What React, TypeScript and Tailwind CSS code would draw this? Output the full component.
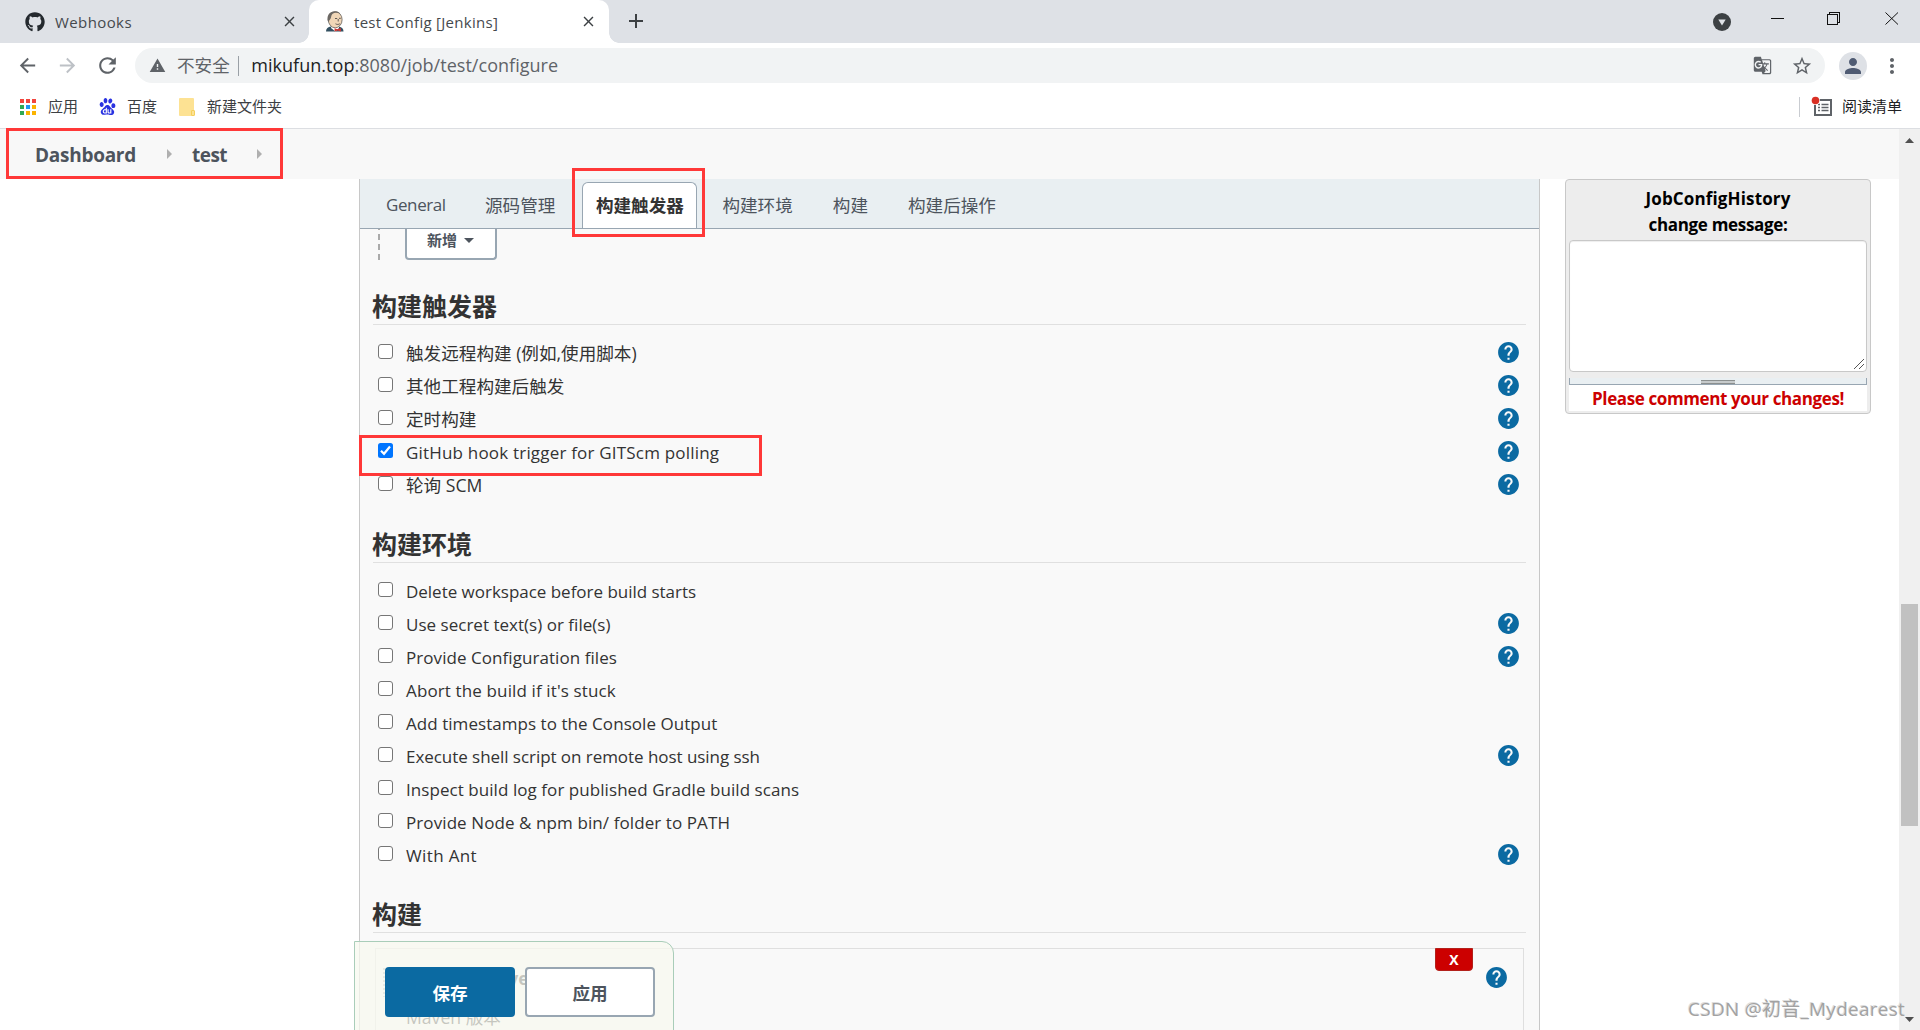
import React from "react";
import { FaGithub } from "react-icons/fa";
import { SiBaidu } from "react-icons/si";
import {
  MdAdd,
  MdArrowBack,
  MdArrowForward,
  MdClose,
  MdGTranslate,
  MdHelp,
  MdMoreVert,
  MdPerson,
  MdRefresh,
  MdStarBorder,
  MdWarning,
} from "react-icons/md";

const UI = "font-['Open_Sans','Noto_Sans_CJK_SC',sans-serif]";

function JenkinsIcon() {
  return (
    <svg width="20" height="21" viewBox="0 0 20 21">
      <path d="M1 20.500c0-3 2-4.500 5-5l8 .300c3 .400 4.500 2 4.500 4.700z" fill="#335061" />
      <path d="M7 14l-1 3 4.500 3.500L14 17v-3z" fill="#fff" />
      <ellipse cx="10.200" cy="8.700" rx="6.900" ry="8.100" fill="#f0d6b7" stroke="#4d4a48" strokeWidth=".7" />
      <path d="M3.300 11C1.700 8 2.600 3 6 1.300 8.500 0 13 0 15 2.300c-3-1-6-.8-7.600.7C5.800 4.600 6.500 7 5 8.500z" fill="#6b6763" />
      <path d="M10 7.500h2.200M14 7.300h1.800M10.500 12.800c1.500.900 3 .800 4.300 0M13.200 8v2.500" stroke="#4d4a48" strokeWidth=".9" fill="none" />
      <path d="M9.500 17.200l3 1 3.200-1.200.3 3.600-3.300-1-3 1z" fill="#d33833" />
    </svg>
  );
}

function TabStrip() {
  return (
    <div className="flex h-[43px] shrink-0 bg-[#dee1e6] text-[15px] text-[#45494d]">
      <div className="flex w-[309px] items-center pl-[25px]">
        <FaGithub className="h-5 w-5 text-[#24292e]" />
        <span className="ml-[10px] pt-px tracking-[0.4px]">Webhooks</span>
        <MdClose className="ml-auto mr-[11px] h-[17px] w-[17px] text-[#3c4043]" />
      </div>
      <div className="relative flex w-[300px] items-center rounded-t-[10px] bg-white pl-4">
        <div className="absolute -left-[10px] bottom-0 h-[10px] w-[10px] bg-[radial-gradient(circle_at_0_0,#dee1e6_9.5px,#fff_10px)]" />
        <div className="absolute -right-[10px] bottom-0 h-[10px] w-[10px] bg-[radial-gradient(circle_at_100%_0,#dee1e6_9.5px,#fff_10px)]" />
        <JenkinsIcon />
        <span className="ml-[9px] pt-px tracking-[0.28px]">test Config [Jenkins]</span>
        <MdClose className="ml-auto mr-[12px] h-[17px] w-[17px] text-[#3c4043]" />
      </div>
      <MdAdd className="ml-[15px] mt-[9px] h-6 w-6 text-[#3c4043]" />
      <svg className="ml-auto mr-[30px] mt-[13px]" width="18" height="18" viewBox="0 0 18 18">
        <circle cx="9" cy="9" r="9" fill="#3c4043" />
        <path d="M5.300 6.500h7.400L9 12.500z" fill="#dee1e6" />
      </svg>
      <svg className="mr-[21px] mt-3" width="138" height="14" viewBox="0 0 138 14" fill="none" stroke="#111">
        <path d="M10 6.500h13M66.500 2.500h10v10h-10zM68.500 2.500v-2h10v10h-2" shapeRendering="crispEdges" />
        <path d="M124.500.5l12.500 12M137 .5l-12.500 12" />
      </svg>
    </div>
  );
}

function Toolbar() {
  return (
    <div className="flex h-[45px] shrink-0 items-center bg-white pl-4 text-[#5f6368]">
      <MdArrowBack className="h-[23px] w-[23px]" />
      <MdArrowForward className="ml-[17px] h-[23px] w-[23px] text-[#bdc1c6]" />
      <MdRefresh className="ml-[16px] h-[25px] w-[25px]" />
      <div className="ml-[15px] flex h-[35px] w-[1690px] items-center rounded-full bg-[#f1f3f4] pl-[14px] pr-[12px] text-[18px]">
        <MdWarning className="h-[17px] w-[17px]" />
        <span className="ml-[11px] text-[17.600px]">不安全</span>
        <span className="ml-[8px] h-5 w-[1.500px] bg-[#9aa0a6]" />
        <span className="ml-[12px] tracking-[0.03px]">
          <span className="text-[#202124]">mikufun.top</span>:8080/job/test/configure
        </span>
        <MdGTranslate className="ml-auto h-[19px] w-[19px]" />
        <MdStarBorder className="ml-[19px] h-[22px] w-[22px]" />
      </div>
      <div className="ml-[14px] flex h-7 w-7 items-center justify-center rounded-full bg-[#dee1e6]">
        <MdPerson className="h-[24px] w-[24px] text-[#4f5b73]" />
      </div>
      <MdMoreVert className="ml-[13px] h-[24px] w-[24px]" />
    </div>
  );
}

const APP_COLORS = [
  "bg-[#f2453d]", "bg-[#f2453d]", "bg-[#f2453d]",
  "bg-[#30a853]", "bg-[#2196f3]", "bg-[#fbb300]",
  "bg-[#30a853]", "bg-[#fbb300]", "bg-[#fbb300]",
];

function Bookmarks() {
  return (
    <div className="flex h-[41px] shrink-0 items-center border-b border-[#dcdee2] bg-white pb-[3px] pl-5 text-[15px] text-[#3c4043]">
      <div className="grid grid-cols-3 gap-[2px]">
        {APP_COLORS.map((c, i) => (
          <span key={i} className={`h-1 w-1 ${c}`} />
        ))}
      </div>
      <span className="ml-[12px]">应用</span>
      <SiBaidu className="ml-[21px] h-[17px] w-[17px] text-[#2932e1]" />
      <span className="ml-[11px]">百度</span>
      <span className="relative ml-[22px] h-[18px] w-[15px] rounded-[1px] bg-[#fde293]">
        <span className="absolute -right-px bottom-0 h-[6px] w-[4px] rounded-[1px] border border-[#f5cf5b] bg-[#fde293]" />
      </span>
      <span className="ml-[13px]">新建文件夹</span>
      <span className="ml-auto h-5 w-px bg-[#c9ccd1]" />
      <svg className="ml-[11px]" width="22" height="22" viewBox="0 0 22 22">
        <rect x="4" y="4" width="16" height="15" fill="none" stroke="#5f6368" strokeWidth="2" />
        <path d="M7 8.500h2M10.500 8.500h7M7 11.500h2M10.500 11.500h7M7 14.500h2M10.500 14.500h7" stroke="#5f6368" strokeWidth="1.500" />
        <circle cx="4.500" cy="4.500" r="4.500" fill="#fff" />
        <circle cx="4.500" cy="4.500" r="3.800" fill="#d93025" />
      </svg>
      <span className="ml-[9px] mr-[18px] text-[#202124]">阅读清单</span>
    </div>
  );
}

function Crumb() {
  return (
    <svg width="5" height="10" viewBox="0 0 5 10">
      <path d="M0 0l5 5-5 5z" fill="#b0b0b0" />
    </svg>
  );
}

function Help() {
  return <MdHelp className="h-[25px] w-[25px] text-[#0b6aa2]" />;
}

function Heading({ children }: { children: React.ReactNode }) {
  return (
    <h2 className="h-[41px] border-b border-[#e0e0e0] text-[25px] font-bold leading-[41px] text-[#333]">
      <span className="relative -left-px top-[2px]">{children}</span>
    </h2>
  );
}

type Item = { label: string; text: string; help?: boolean; checked?: boolean };

const TRIGGERS: Item[] = [
  { label: "触发远程构建 (例如,使用脚本)", text: "text-[17.6px]", help: true },
  { label: "其他工程构建后触发", text: "text-[17.6px]", help: true },
  { label: "定时构建", text: "text-[17.6px]", help: true },
  { label: "GitHub hook trigger for GITScm polling", text: "text-[17px] font-medium tracking-[0.19px]", help: true, checked: true },
  { label: "轮询 SCM", text: "text-[17.6px]", help: true },
];

const ENVIRONMENT: Item[] = [
  { label: "Delete workspace before build starts", text: "text-[17px] font-medium tracking-[-0.02px]" },
  { label: "Use secret text(s) or file(s)", text: "text-[17px] font-medium tracking-[0.02px]", help: true },
  { label: "Provide Configuration files", text: "text-[17px] font-medium tracking-[0.06px]", help: true },
  { label: "Abort the build if it's stuck", text: "text-[17px] font-medium tracking-[0.13px]" },
  { label: "Add timestamps to the Console Output", text: "text-[17px] font-medium tracking-[0.05px]" },
  { label: "Execute shell script on remote host using ssh", text: "text-[17px] font-medium tracking-[-0.05px]", help: true },
  { label: "Inspect build log for published Gradle build scans", text: "text-[17px] font-medium tracking-[0.06px]" },
  { label: "Provide Node & npm bin/ folder to PATH", text: "text-[17px] font-medium tracking-[0.09px]" },
  { label: "With Ant", text: "text-[17px] font-medium tracking-[0.36px]", help: true },
];

function Options({ items }: { items: Item[] }) {
  return (
    <div className="pl-[5px] pr-[5px] pt-[10px]">
      {items.map((o) => (
        <div key={o.label} className="flex h-[33px] items-center">
          {o.checked ? (
            <svg width="15" height="15" viewBox="0 0 15 15">
              <rect width="15" height="15" rx="2.500" fill="#0075ff" />
              <path d="M3 7.800l3 3 6-7.300" stroke="#fff" strokeWidth="2.200" fill="none" />
            </svg>
          ) : (
            <span className="h-[15px] w-[15px] rounded-[3px] border border-[#767676] bg-white" />
          )}
          <span className={`relative top-[2px] ml-[13px] text-[#333] ${o.text}`}>{o.label}</span>
          {o.help && (
            <span className="ml-auto pt-px">
              <Help />
            </span>
          )}
        </div>
      ))}
    </div>
  );
}

function ConfigPanel() {
  return (
    <div className="flex w-[1181px] flex-col border-x border-[#c8c8c8] bg-[#f9f9f9]">
      <div className="flex h-[50px] shrink-0 border-b border-[#98a6b2] bg-[#e9eff2] pt-[3px] text-[17.600px] leading-[46px] text-[#4d545d]">
        <span className="ml-[26px] w-[60px] text-[17px] tracking-[-0.4px]">General</span>
        <span className="ml-[39px]">源码管理</span>
        <span className="ml-[27px] w-[115px] rounded-t-[6px] border border-b-0 border-[#98a6b2] bg-white text-center font-bold leading-[44px] text-[#333]">
          构建触发器
        </span>
        <span className="ml-[25px]">构建环境</span>
        <span className="ml-[40px]">构建</span>
        <span className="ml-[40px]">构建后操作</span>
      </div>
      <div className="flex h-[31px] pl-[18px]">
        <span className="w-[2px] bg-[repeating-linear-gradient(to_bottom,#aaa_0_1px,transparent_1px_5px,#aaa_5px_10px)]" />
        <span className="ml-[25px] flex w-[92px] items-center rounded-b-[4px] border-2 border-t-0 border-[#98a6b2] bg-white pb-[7px] pl-[20px] text-[15px] font-bold text-[#4d545d]">
          新增
          <svg className="ml-[7px]" width="10" height="5" viewBox="0 0 10 5">
            <path d="M0 0h10L5 5z" fill="#4d545d" />
          </svg>
        </span>
      </div>
      <div className="flex flex-col pl-[13px] pr-[13px] pt-[24px]">
        <Heading>构建触发器</Heading>
        <Options items={TRIGGERS} />
        <div className="h-[22px]" />
        <Heading>构建环境</Heading>
        <Options items={ENVIRONMENT} />
        <div className="h-[22px]" />
        <Heading>构建</Heading>
        <div className="ml-[2px] mr-[2px] mt-[15px] h-[90px] border border-[#dfdfdf]">
          <div className="flex">
            <div className="ml-[6px] mt-[18px] h-[30px] w-[12px] bg-[radial-gradient(#bbb_1px,transparent_1.2px)] bg-[size:4px_4px]" />
            <div className="pl-[12px] pt-[13px] text-[17px] text-[#333]">
              <div className="text-[17.600px] font-bold leading-[33px]">调用顶层 Maven 目标</div>
              <div className="mt-[6px] text-[17.600px] leading-[33px]">Maven 版本</div>
            </div>
            <span className="-mt-px ml-auto flex h-[23px] w-[38px] items-center justify-center rounded-b-[4px] border border-[#b3211b] bg-[#c00] text-[14px] font-bold text-white">
              X
            </span>
            <span className="ml-[11px] mr-[14px] mt-[16px]">
              <Help />
            </span>
          </div>
        </div>
      </div>
    </div>
  );
}

function HistoryPanel() {
  return (
    <div className="ml-[25px] h-[235px] w-[306px] rounded-[4px] border border-[#c8c8c8] bg-[#ededed] px-[3px] text-center">
      <div className="h-[57px] pt-[6px] text-[17px] font-bold leading-[26px] text-black">
        <div className="tracking-[0.14px]">JobConfigHistory</div>
        <div className="tracking-[-0.32px]">change message:</div>
      </div>
      <div className="mt-[3px] flex h-[132px] items-end justify-end rounded-[4px] border border-[#c8c8c8] bg-white p-[2px] shadow-[inset_0_1px_1px_rgba(0,0,0,.07)]">
        <svg width="10" height="10" viewBox="0 0 10 10">
          <path d="M0 10L10 0M5 10l5-5" stroke="#555" />
        </svg>
      </div>
      <div className="mt-[6px] flex h-[7px] justify-center border border-t-0 border-[#98a6b2] bg-[#e9eff2] pt-[2px]">
        <span className="h-[4px] w-[34px] border-y border-[#8b8f8f] bg-[#c6cacb]" />
      </div>
      <div className="h-[26px] bg-white text-[17px] font-bold leading-[28px] tracking-[-0.38px] text-[#c00]">
        Please comment your changes!
      </div>
    </div>
  );
}

function Scrollbar() {
  return (
    <div className="flex h-full w-[21px] flex-col items-center bg-[#f0f0f0] pb-[8px] pt-[9px]">
      <svg width="9" height="5" viewBox="0 0 9 5"><path d="M0 5h9L4.500 0z" fill="#505050" /></svg>
      <div className="mt-[461px] h-[222px] w-[17px] bg-[#c1c1c1]" />
      <svg className="mt-auto" width="9" height="5" viewBox="0 0 9 5"><path d="M0 0h9L4.500 5z" fill="#505050" /></svg>
    </div>
  );
}

export default function App() {
  return (
    <div className={`relative flex h-[1030px] w-[1920px] flex-col overflow-hidden bg-white ${UI}`}>
      <TabStrip />
      <Toolbar />
      <Bookmarks />
      <div className="flex min-h-0 flex-1">
        <div className="flex w-[1899px] flex-col overflow-hidden">
          <div className="flex h-[50px] shrink-0 items-center bg-[#f8f8f8] pl-[35px] text-[19px] font-bold text-[#4d545d]">
            <span className="w-[102px] pt-[2px] tracking-[-0.27px]">Dashboard</span>
            <span className="ml-[30px]"><Crumb /></span>
            <span className="ml-[20px] w-[36px] pt-[2px] tracking-[-0.54px]">test</span>
            <span className="ml-[29px]"><Crumb /></span>
          </div>
          <div className="flex h-[851px] items-start overflow-hidden pl-[359px]">
            <ConfigPanel />
            <HistoryPanel />
          </div>
        </div>
        <Scrollbar />
      </div>

      <div className="absolute left-[354px] top-[941px] flex h-[95px] w-[320px] gap-[10px] rounded-tr-[12px] border border-[#a9cdb9] bg-[#f7f8ef]/75 pl-[30px] pt-[25px] text-[17.600px] font-bold">
        <div className="flex h-[50px] w-[130px] items-center justify-center rounded-[4px] bg-[#0b6aa2] pt-[3px] text-white">保存</div>
        <div className="flex h-[50px] w-[130px] items-center justify-center rounded-[4px] border-2 border-[#98a6b2] bg-white pt-[3px] text-[#4d545d]">应用</div>
      </div>

      <div className="absolute left-[6px] top-[128px] h-[51px] w-[277px] border-[3px] border-[#ff3838]" />
      <div className="absolute left-[572px] top-[168px] h-[69px] w-[133px] border-[3px] border-[#ff3838]" />
      <div className="absolute left-[359px] top-[435px] h-[41px] w-[403px] border-[3px] border-[#ff3838]" />

      <div className="absolute left-[1688px] top-[994px] whitespace-nowrap text-[19px] leading-[30px] tracking-[0.25px] text-[#a2a2a2] [text-shadow:-1px_-1px_0_#ddd]">
        CSDN @初音_Mydearest
      </div>
    </div>
  );
}
